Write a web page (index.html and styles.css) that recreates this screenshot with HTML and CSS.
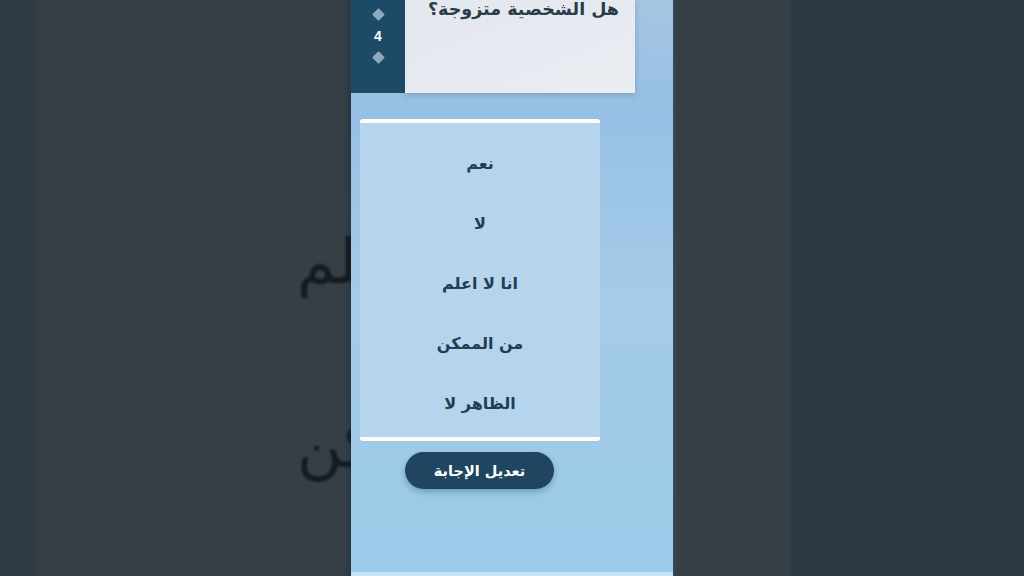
FILE: index.html
```html
<!DOCTYPE html>
<html lang="ar">
<head>
<meta charset="utf-8">
<title>سؤال</title>
<link rel="stylesheet" href="styles.css">
</head>
<body>
<div class="screen">
  <div class="side side-left">
    <div class="bg-line bg-line-1" dir="rtl">انا لا اعلم</div>
    <div class="bg-line bg-line-2" dir="rtl">من الممكن</div>
  </div>
  <div class="phone">
    <div class="top-row">
      <div class="nav-strip">
        <span class="diamond diamond-top"></span>
        <span class="num">4</span>
        <span class="diamond diamond-bottom"></span>
      </div>
      <div class="question-card" dir="rtl">
        <div class="question">هل الشخصية متزوجة؟</div>
      </div>
    </div>
    <div class="answers" dir="rtl">
      <div class="answer">نعم</div>
      <div class="answer">لا</div>
      <div class="answer">انا لا اعلم</div>
      <div class="answer">من الممكن</div>
      <div class="answer">الظاهر لا</div>
    </div>
    <div class="btn-row">
      <button class="edit-btn" dir="rtl">تعديل الإجابة</button>
    </div>
    <div class="spacer"></div>
    <div class="bottom-line"></div>
  </div>
  <div class="side side-right"></div>
</div>
</body>
</html>
```
FILE: styles.css
```css
html, body {
  margin: 0;
  padding: 0;
  width: 1024px;
  height: 576px;
  overflow: hidden;
  background: #333c44;
  font-family: "DejaVu Sans", "Noto Sans", sans-serif;
}

.screen {
  display: flex;
  width: 1024px;
  height: 576px;
}

.side {
  height: 576px;
  overflow: hidden;
}

.side-left {
  width: 351px;
  background: linear-gradient(to right, #2f3a43 0, #2f3a43 32px, #363f46 40px, #363f46 344px, #2c363e 351px);
  display: flex;
  flex-direction: column;
  direction: ltr;
}

.bg-line {
  width: 520px;
  margin-left: 297px;
  text-align: left;
  white-space: nowrap;
  font-size: 62px;
  line-height: 80px;
  color: #141b21;
  filter: blur(0.8px);
}

.bg-line-1 {
  margin-top: 222px;
}

.bg-line-2 {
  margin-top: 104px;
}

.side-right {
  width: 351px;
  background: linear-gradient(to right, #3a4a58 0, #363f46 4px, #363f46 117px, #2d3a44 119px, #2d3a44 100%);
}

.phone {
  width: 322px;
  height: 576px;
  display: flex;
  flex-direction: column;
  background: linear-gradient(to bottom, #a6c5e2 0, #96c0e4 110px, #a5cbe8 300px, #9acbe8 560px);
}

.top-row {
  display: flex;
  height: 93px;
}

.nav-strip {
  width: 54px;
  background: #1d4a66;
  display: flex;
  flex-direction: column;
  align-items: center;
  padding-top: 9px;
  box-sizing: border-box;
}

.diamond {
  width: 9px;
  height: 9px;
  background: #8ea9bc;
  transform: rotate(45deg);
  border-radius: 1px;
}

.diamond-top {
  margin-top: 1px;
}

.num {
  margin-top: 9px;
  color: #ffffff;
  font-family: "Liberation Sans", Arial, sans-serif;
  font-weight: bold;
  font-size: 14px;
  line-height: 16px;
}

.diamond-bottom {
  margin-top: 9px;
}

.question-card {
  width: 230px;
  background: linear-gradient(to bottom right, #e3e7ee, #eaedf2);
  box-shadow: 0 2px 6px rgba(40, 70, 100, 0.25);
  padding-right: 16px;
  box-sizing: border-box;
}

.question {
  margin-top: -5px;
  font-size: 17.5px;
  font-weight: bold;
  color: #2b3b48;
  line-height: 28px;
  text-align: right;
}

.answers {
  margin-top: 26px;
  margin-left: 9px;
  width: 240px;
  height: 322px;
  box-sizing: border-box;
  border-top: 4px solid #ffffff;
  border-bottom: 4px solid #ffffff;
  border-radius: 3px;
  background: #b6d4eb;
  padding-top: 10px;
  display: flex;
  flex-direction: column;
}

.answer {
  height: 60px;
  display: flex;
  align-items: center;
  justify-content: center;
  font-size: 16px;
  font-weight: bold;
  color: #1f3d55;
}

.btn-row {
  margin-top: 11px;
  padding-left: 54px;
  display: flex;
}

.edit-btn {
  width: 149px;
  height: 37px;
  border: none;
  border-radius: 19px;
  background: #1f4560;
  color: #ffffff;
  font-family: "DejaVu Sans", sans-serif;
  font-weight: bold;
  font-size: 14.5px;
  box-shadow: 0 3px 6px rgba(20, 50, 80, 0.3);
  padding: 0;
}

.spacer {
  flex: 1;
}

.bottom-line {
  height: 4px;
  background: #c4e2f2;
}
```
